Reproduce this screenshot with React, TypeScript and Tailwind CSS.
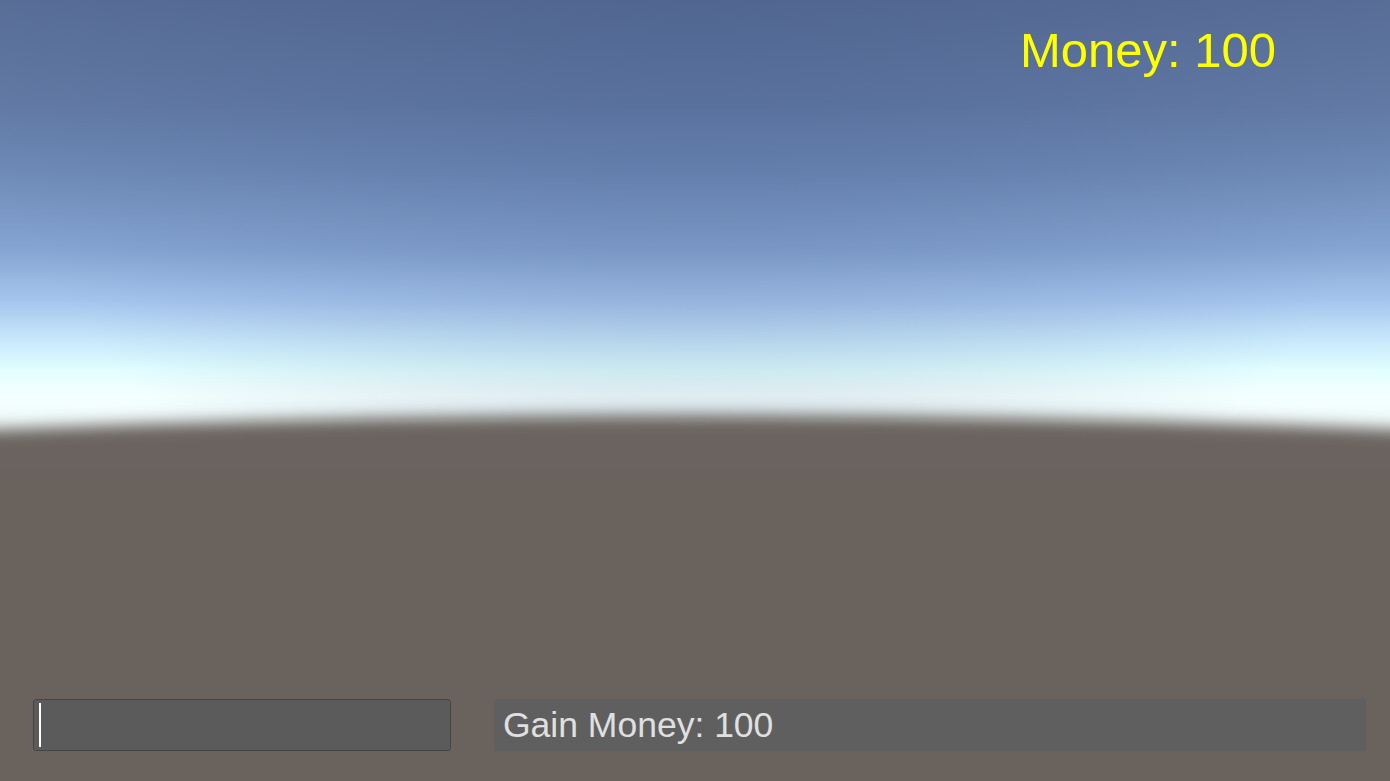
import React from "react";

function Skybox() {
  return (
    <svg className="absolute inset-0 h-full w-full" viewBox="0 0 1390 781" preserveAspectRatio="none">
      <defs>
        <linearGradient id="sky" x1="0" y1="0" x2="0" y2="781" gradientUnits="userSpaceOnUse">
          <stop offset="0" stopColor="#586e97" />
          <stop offset="0.13" stopColor="#6179a4" />
          <stop offset="0.22" stopColor="#6e8ab7" />
          <stop offset="0.32" stopColor="#86a5d2" />
          <stop offset="0.385" stopColor="#a5c5ee" />
          <stop offset="0.44" stopColor="#cbebfc" />
          <stop offset="0.475" stopColor="#e2feff" />
          <stop offset="0.505" stopColor="#f4ffff" />
          <stop offset="0.55" stopColor="#f0fafa" />
        </linearGradient>
        <radialGradient id="shade" cx="695" cy="-120" r="760" gradientUnits="userSpaceOnUse">
          <stop offset="0" stopColor="#3f5585" stopOpacity="0.35" />
          <stop offset="1" stopColor="#3f5585" stopOpacity="0" />
        </radialGradient>
        <filter id="blur" x="-10%" y="-10%" width="120%" height="120%">
          <feGaussianBlur stdDeviation="8" />
        </filter>
      </defs>
      <rect x="0" y="0" width="1390" height="781" fill="url(#sky)" />
      <rect x="0" y="0" width="1390" height="420" fill="url(#shade)" />
      <g filter="url(#blur)">
        <circle cx="695" cy={415 + 17250} r="17250" fill="#6b635e" />
      </g>
      <rect x="0" y="470" width="1390" height="311" fill="#6a625d" />
    </svg>
  );
}

export default function App() {
  return (
    <div className="relative h-[781px] w-full overflow-hidden bg-[#6a625d] font-['Liberation_Sans',Arial,sans-serif]">
      <Skybox />
      <div className="relative flex h-full flex-col justify-between">
        <div className="flex justify-end pr-[114px] pt-[26px]">
          <span className="text-[49px] leading-none text-[#ffff00]">Money: 100</span>
        </div>
        <div className="flex items-center gap-[43px] pb-[30px] pl-[33px] pr-[24px]">
          <div className="flex h-[52px] w-[418px] items-center rounded-[3px] border border-[#454545] bg-[#5b5b5b] pl-[5px]">
            <div className="h-[44px] w-[2px] bg-white" />
          </div>
          <div className="h-[52px] flex-1 bg-[#5f5f5f] pl-[9px] text-[35.5px] leading-[52px] text-[#e0e0e0]">
            Gain Money: 100
          </div>
        </div>
      </div>
    </div>
  );
}
